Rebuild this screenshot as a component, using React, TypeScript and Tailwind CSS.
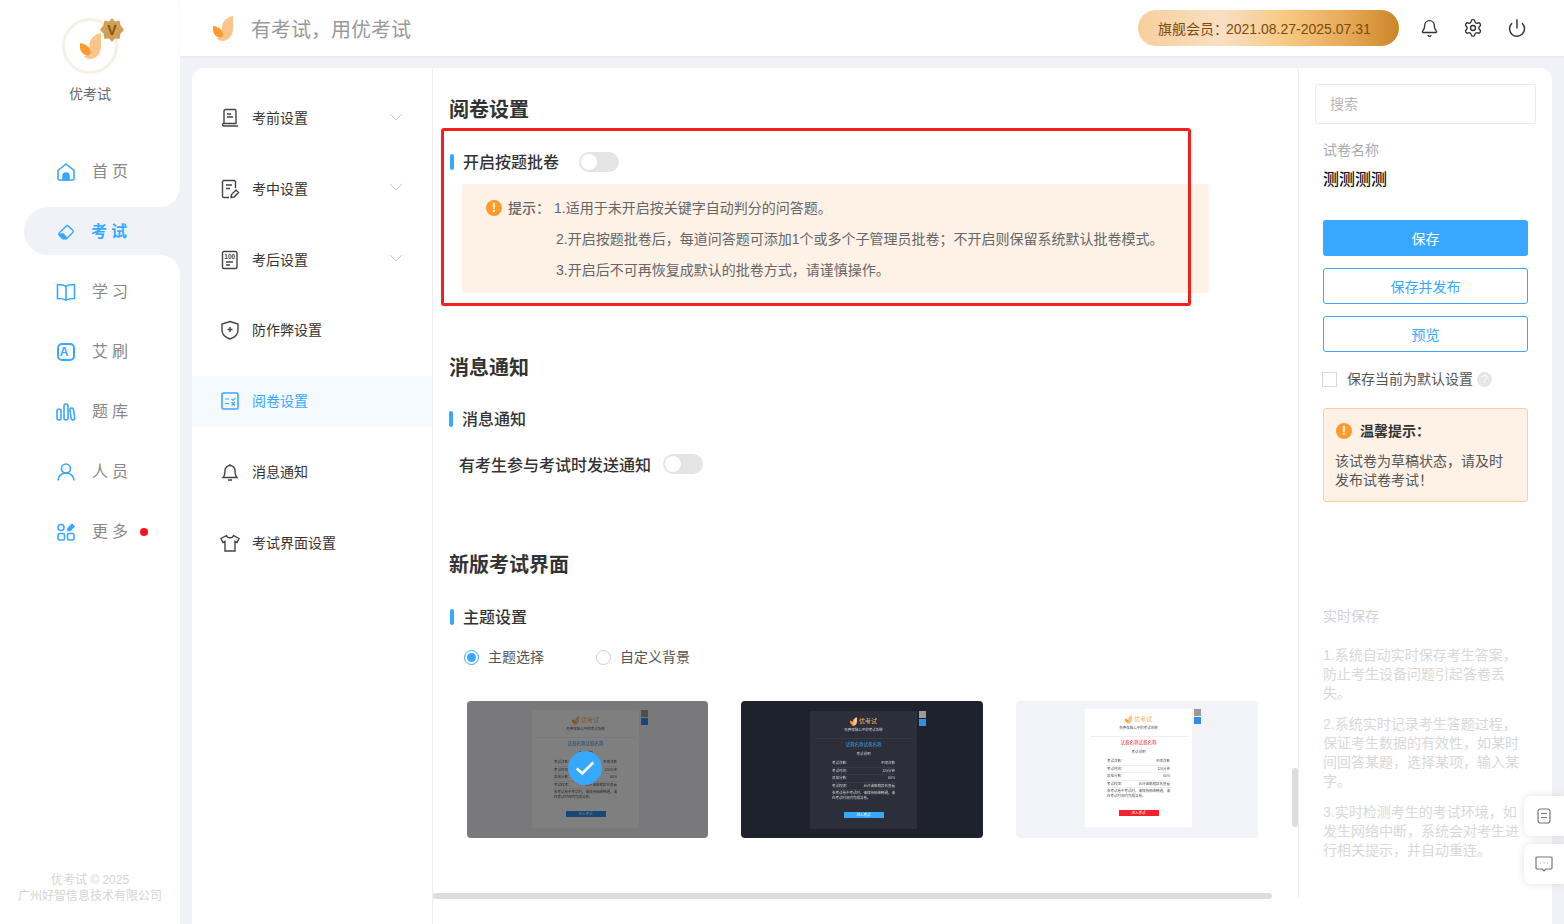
import { Bell, ChevronDown, Power, Settings } from 'lucide-react'
import type { ReactNode } from 'react'

const LogoMark = ({ className }: { className: string }) => (
  <svg viewBox="0 0 21 26" className={className}>
    <path d="M21 0V13C21 20.500 16.500 26 10 26C7.500 26 5.500 25 4 23.500C8 22.500 9.500 18 9.500 12C9.500 5.500 14.500 1.500 21 0Z" fill="#ffc48a" />
    <path d="M0 10C6 11 10.500 14.500 10.500 19C10.500 21.500 9.500 22.500 8 22.500C3.500 22.500 0 18.500 0 14Z" fill="#ff9a2e" />
  </svg>
)

const blueIcon = 'h-5 w-5 fill-none stroke-[#38a8ff] stroke-[1.6]'
const darkIcon = 'h-5 w-5 fill-none stroke-[#444] stroke-[1.4]'

const navTop = [
  {
    label: '首页',
    icon: (
      <svg viewBox="0 0 20 20" className={blueIcon}>
        <path d="M2 8.500L10 2L18 8.500V16.500A1.500 1.500 0 0 1 16.500 18H3.500A1.500 1.500 0 0 1 2 16.500Z" />
        <path d="M7 18V14A3 3 0 0 1 13 14V18Z" className="fill-[#38a8ff]" />
      </svg>
    ),
  },
]

const navBottom = [
  {
    label: '学习',
    icon: (
      <svg viewBox="0 0 20 20" className={blueIcon}>
        <path d="M10 4.500C8 3 5 2.500 1.500 2.500V16.500C5 16.500 8 17 10 18C12 17 15 16.500 18.500 16.500V2.500C15 2.500 12 3 10 4.500ZM10 4.500V18" />
      </svg>
    ),
  },
  {
    label: '艾刷',
    icon: (
      <span className="flex h-[18px] w-[18px] items-center justify-center rounded-[5px] border-2 border-[#38a8ff] text-[12px] font-bold leading-none text-[#38a8ff]">
        A
      </span>
    ),
  },
  {
    label: '题库',
    icon: (
      <svg viewBox="0 0 20 20" className={blueIcon}>
        <rect x="1" y="7" width="4" height="11" rx="2" />
        <rect x="8" y="2" width="4" height="16" rx="2" />
        <rect x="14.500" y="6" width="3.600" height="12" rx="1.800" transform="rotate(-8 16 12)" />
      </svg>
    ),
  },
  {
    label: '人员',
    icon: (
      <svg viewBox="0 0 20 20" className={blueIcon}>
        <circle cx="10" cy="6.500" r="4.500" />
        <path d="M2 18.500C2 14 5.500 11 10 11C14.500 11 18 14 18 18.500" />
      </svg>
    ),
  },
  {
    label: '更多',
    dot: true,
    icon: (
      <svg viewBox="0 0 20 20" className={blueIcon}>
        <circle cx="5" cy="5.500" r="3" />
        <rect x="2" y="11.500" width="6.500" height="6.500" rx="1.500" />
        <rect x="11.500" y="11.500" width="6.500" height="6.500" rx="1.500" />
        <path d="M12 6.500L16 2.500L18 4.500L14 8.500H12Z" className="fill-[#38a8ff]" />
      </svg>
    ),
  },
]

const NavRow = ({ label, icon, dot }: { label: string; icon: ReactNode; dot?: boolean }) => (
  <div className="flex h-[60.100px] items-center pl-[56px] text-base tracking-[4px] text-[#888]">
    <span className="flex w-5 justify-center">{icon}</span>
    <span className="ml-4">{label}</span>
    {dot && <span className="ml-2 h-2 w-2 rounded-full bg-[#f5141e]" />}
  </div>
)

const Sidebar = () => (
  <aside className="flex h-full w-[180px] shrink-0 flex-col bg-[#f1f2f7]">
    <div className="h-[207px] rounded-br-[20px] bg-white">
      <div className="relative mx-auto mt-[18px] flex h-14 w-14 items-center justify-center rounded-full border-[3px] border-[#f6f0e5]">
        <LogoMark className="h-[26px] w-[21px]" />
        <svg viewBox="0 0 24 24" className="absolute -top-[3px] -right-[9px] h-6 w-6">
          <polygon
            points="12,0 15,3.500 19.500,2.500 20.500,7 24,12 20.500,15.500 19.500,21 15,20.500 12,24 9,20.500 4.500,21 3.500,15.500 0,12 3.500,7 4.500,2.500 9,3.500"
            fill="#cfa055"
          />
          <text x="12" y="17" textAnchor="middle" fontSize="14" fontWeight="700" fill="#8a5208">
            V
          </text>
        </svg>
      </div>
      <div className="mt-[10px] text-center text-sm leading-5 text-[#666]">优考试</div>
      <div className="mt-[38px]">
        {navTop.map((item) => (
          <NavRow key={item.label} {...item} />
        ))}
      </div>
    </div>
    <div className="h-12 bg-white pl-6">
      <div className="flex h-full items-center rounded-l-[24px] bg-[#f1f2f7] pt-[2px] pl-[33px] text-base font-bold tracking-[4px] text-[#38a8ff]">
        <svg viewBox="0 0 20 20" className="h-[18px] w-[18px]">
          <path d="M2.500 11L10 3.500A1.800 1.800 0 0 1 12.500 3.500L17.500 8A1.800 1.800 0 0 1 17.500 10.500L10.500 17.500H6.500L2.500 13.500A1.800 1.800 0 0 1 2.500 11Z" fill="none" stroke="#38a8ff" strokeWidth="1.600" />
          <path d="M2 12L7 11L11 15.500L10 17.500H6.500L2.500 14Z" fill="#38a8ff" />
        </svg>
        <span className="ml-4">考试</span>
      </div>
    </div>
    <div className="flex flex-1 flex-col rounded-tr-[20px] bg-white pt-[7px]">
      {navBottom.map((item) => (
        <NavRow key={item.label} {...item} />
      ))}
      <div className="mt-auto pb-[20px] text-center text-xs leading-4 text-[#d4d4d4]">
        <p>优考试 © 2025</p>
        <p>广州好智信息技术有限公司</p>
      </div>
    </div>
  </aside>
)

const Header = () => (
  <header className="flex h-14 shrink-0 items-center bg-white pr-[37px] pl-[33px] shadow-[0_1px_3px_rgba(0,0,0,0.06)]">
    <LogoMark className="h-[25px] w-5" />
    <span className="ml-[18px] pt-1 text-xl text-[#999]">有考试，用优考试</span>
    <div className="ml-auto flex h-9 w-[261px] items-center rounded-full bg-[linear-gradient(90deg,#f7d09b_0%,#f9dfc4_32%,#f7c780_58%,#e4a654_82%,#cc8526_100%)] pt-[2px] pl-5 text-sm text-[#7a4a10]">
      旗舰会员<span className="-mr-0.5">：</span>2021.08.27-2025.07.31
    </div>
    <Bell className="ml-[21px] h-[19px] w-[19px] stroke-[#333]" strokeWidth={1.7} />
    <Settings className="ml-[24px] h-5 w-5 stroke-[#333]" strokeWidth={1.6} />
    <Power className="ml-[24px] h-5 w-5 stroke-[#333]" strokeWidth={1.7} />
  </header>
)

const subNav = [
  {
    label: '考前设置',
    arrow: true,
    icon: (
      <svg viewBox="0 0 20 20" className={darkIcon}>
        <path d="M4 15.500V3A1.500 1.500 0 0 1 5.500 1.500H14.500A1.500 1.500 0 0 1 16 3V16M7 6H11M7 9H13M3.500 18H18M3.500 18A1.300 1.300 0 0 1 3.500 15.500H16" />
      </svg>
    ),
  },
  {
    label: '考中设置',
    arrow: true,
    icon: (
      <svg viewBox="0 0 20 20" className={darkIcon}>
        <path d="M9 18.500H4A1.500 1.500 0 0 1 2.500 17V3A1.500 1.500 0 0 1 4 1.500H14A1.500 1.500 0 0 1 15.500 3V9M6 6H12M6 9.500H10M11 18.500L11.500 15.500L16 11L18.500 13.500L14 18Z" />
      </svg>
    ),
  },
  {
    label: '考后设置',
    arrow: true,
    icon: (
      <svg viewBox="0 0 20 20" className={darkIcon}>
        <rect x="2.500" y="1.500" width="14.500" height="17" rx="1.500" />
        <path d="M6 12H13M6 15H10" />
        <text x="9.700" y="9" textAnchor="middle" fontSize="6.500" fontWeight="700" fill="#444" stroke="none">
          100
        </text>
      </svg>
    ),
  },
  {
    label: '防作弊设置',
    icon: (
      <svg viewBox="0 0 20 20" className={darkIcon}>
        <path d="M10 1.500L18 4V10C18 14.500 14.500 17.500 10 19C5.500 17.500 2 14.500 2 10V4ZM10 7V12M7.500 9.500H12.500" />
      </svg>
    ),
  },
  {
    label: '阅卷设置',
    active: true,
    icon: (
      <svg viewBox="0 0 20 20" className={blueIcon}>
        <rect x="2" y="2" width="16" height="16" rx="1.500" />
        <path d="M5 8H9M5 12.500H9M11.500 8L13 9.500L15.500 6.500M11.500 11L15 14.500M15 11L11.500 14.500" strokeWidth="1.100" />
      </svg>
    ),
  },
  {
    label: '消息通知',
    icon: (
      <svg viewBox="0 0 20 20" className={darkIcon}>
        <path d="M3 15.500C4.500 14 5 13 5 8.500A5 5 0 0 1 15 8.500C15 13 15.500 14 17 15.500ZM8 18H12M10 2V3.500" />
      </svg>
    ),
  },
  {
    label: '考试界面设置',
    icon: (
      <svg viewBox="0 0 20 20" className={darkIcon}>
        <path d="M6.500 2.500L1 5.500L3 9.500L5 8.500V18H15V8.500L17 9.500L19 5.500L13.500 2.500C13 5.500 7 5.500 6.500 2.500Z" />
      </svg>
    ),
  },
]

const SubNav = () => (
  <nav className="flex w-[241px] shrink-0 flex-col gap-5 border-r border-[#eeeeee] pt-[24.600px]">
    {subNav.map((item) => (
      <div
        key={item.label}
        className={`flex h-[50.830px] items-center pl-[28px] text-sm ${item.active ? 'bg-[#f5faff] text-[#38a8ff]' : 'text-[#333]'}`}
      >
        <span className="flex w-5 justify-center">{item.icon}</span>
        <span className="ml-3">{item.label}</span>
        {item.arrow && <ChevronDown className="mt-[-3px] ml-auto mr-[24px] h-6 w-6 stroke-[#c8c8c8]" strokeWidth={1} />}
      </div>
    ))}
  </nav>
)

const Toggle = () => (
  <span className="flex h-5 w-10 items-center rounded-full bg-[#e4e4e4] pl-[2px]">
    <span className="h-4 w-4 rounded-full bg-white" />
  </span>
)

const SectionLabel = ({ children }: { children: ReactNode }) => (
  <div className="flex h-[22px] items-center text-base font-medium text-[#333]">
    <span className="h-4 w-1 rounded-sm bg-[#38a8ff]" />
    <span className="ml-[9px] pt-[2px]">{children}</span>
  </div>
)

const WarnIcon = ({ size }: { size: string }) => (
  <span className={`flex shrink-0 items-center justify-center rounded-full bg-[#ff9a2e] text-xs font-bold leading-none text-white ${size}`}>
    !
  </span>
)

const Radio = ({ checked, label }: { checked?: boolean; label: string }) => (
  <div className="flex items-center text-sm text-[#555]">
    <span className={`flex h-[15px] w-[15px] items-center justify-center rounded-full border ${checked ? 'border-[#38a8ff]' : 'border-[#cfcfcf]'}`}>
      {checked && <span className="h-[9px] w-[9px] rounded-full bg-[#38a8ff]" />}
    </span>
    <span className="ml-[9px]">{label}</span>
  </div>
)

const examRows = [
  ['考试次数：', '不限次数'],
  ['考试时间：', '120分钟'],
  ['及格分数：', '60%'],
  ['考试权限：', '允许该邮箱报名查看'],
]

type ThumbProps = {
  box: string
  panel: string
  accent: string
  line: string
  rowLine: string
  button: string
  selected?: boolean
}

const ThemeThumb = ({ box, panel, accent, line, rowLine, button, selected }: ThumbProps) => (
  <div className={`relative h-[137px] shrink-0 overflow-hidden rounded ${box}`}>
    <div className={`relative flex h-[118px] w-[107px] flex-col items-center pt-[6px] text-[3.500px] leading-[5px] ${panel}`}>
      <div className="flex items-center gap-[2px] text-[6px] leading-[9px] text-[#f2b36a] blur-[0.3px]">
        <LogoMark className="h-[9px] w-[7px]" />
        优考试
      </div>
      <div className="mt-[1.500px] blur-[0.3px]">免费保障公平的考试系统</div>
      <div className={`mt-[5px] h-px w-[98px] ${line}`} />
      <div className={`mt-[3px] text-[4.500px] leading-[6px] blur-[0.3px] ${accent}`}>试卷名称试卷名称</div>
      <div className="mt-1 blur-[0.3px]">考试说明</div>
      <div className="mt-[3.750px] w-[63px] blur-[0.3px]">
        {examRows.map(([name, value]) => (
          <div key={name} className={`flex h-[7.500px] items-center justify-between border-b ${rowLine}`}>
            <span>{name}</span>
            <span>{value}</span>
          </div>
        ))}
        <div className="mt-px">参考试卷中考试时，请保持网络畅通，请在考试时间内完成答卷。</div>
      </div>
      <div className={`mt-[10.750px] flex h-[6px] w-10 items-center justify-center text-white blur-[0.2px] ${button}`}>
        进入考试
      </div>
      <div className="absolute top-0 -right-[9px] flex flex-col gap-[1px]">
        <span className="h-[7px] w-[7px] bg-[#9a9a9a]" />
        <span className="h-[7px] w-[7px] bg-[#2f8fe8]" />
      </div>
    </div>
    {selected && (
      <div className="absolute inset-0 flex items-center justify-center bg-black/50 pr-[5px] pb-[3px]">
        <span className="flex h-[34px] w-[34px] items-center justify-center rounded-full bg-[#38a8ff]">
          <svg viewBox="0 0 20 20" className="h-[22px] w-[22px] fill-none stroke-white stroke-[2.400]">
            <path d="M2.500 10.500L7.500 15L17.500 5" />
          </svg>
        </span>
      </div>
    )}
  </div>
)

const ContentPane = () => (
  <section className="relative min-w-0 flex-1 overflow-hidden pt-[27px] pl-4">
    <h2 className="h-7 text-xl font-bold leading-[30px] text-[#333]">阅卷设置</h2>
    <div className="mt-[29px] flex h-5 items-center pl-px">
      <SectionLabel>开启按题批卷</SectionLabel>
      <span className="ml-[20px]">
        <Toggle />
      </span>
    </div>
    <div className="mt-3 ml-[13px] h-[109px] w-[747px] rounded-[3px] bg-[#fef1e6] pt-2 pl-6 text-sm text-[#666]">
      <div className="flex h-[31px] items-center">
        <WarnIcon size="h-4 w-4" />
        <span className="ml-[6px] font-medium">提示：</span>
        <span className="ml-1">1.适用于未开启按关键字自动判分的问答题。</span>
      </div>
      <div className="flex h-[31px] items-center pl-[70px]">2.开启按题批卷后，每道问答题可添加1个或多个子管理员批卷；不开启则保留系统默认批卷模式。</div>
      <div className="flex h-[31px] items-center pl-[70px]">3.开启后不可再恢复成默认的批卷方式，请谨慎操作。</div>
    </div>

    <h2 className="mt-[60px] h-7 text-xl font-bold leading-[30px] text-[#333]">消息通知</h2>
    <div className="mt-[27px]">
      <SectionLabel>消息通知</SectionLabel>
    </div>
    <div className="mt-6 flex h-5 items-center pl-[10px] text-base font-medium text-[#333]">
      <span className="pt-[3px]">有考生参与考试时发送通知</span>
      <span className="ml-3">
        <Toggle />
      </span>
    </div>

    <h2 className="mt-[76px] h-7 text-xl font-bold leading-[30px] text-[#333]">新版考试界面</h2>
    <div className="mt-7 pl-px">
      <SectionLabel>主题设置</SectionLabel>
    </div>
    <div className="mt-[19px] flex h-5 items-center gap-[52px] pl-[15px]">
      <Radio checked label="主题选择" />
      <Radio label="自定义背景" />
    </div>
    <div className="mt-[34px] ml-[18px] flex gap-[33px]">
      <ThemeThumb
        box="w-[241px] bg-[#f2f3f8] pt-[9px] pl-[65px]"
        panel="bg-white text-[#555]"
        accent="text-[#2f8fe8]"
        line="bg-[#eeeeee]"
        rowLine="border-[#eeeeee]"
        button="bg-[#2f8fe8]"
        selected
      />
      <ThemeThumb
        box="w-[242px] bg-[#1e222d] pt-[10px] pl-[69px]"
        panel="bg-[#2c2f3a] text-[#d5d5d5]"
        accent="text-[#38a8ff]"
        line="bg-[#383b46]"
        rowLine="border-[#383b46]"
        button="bg-[#38a8ff]"
      />
      <ThemeThumb
        box="w-[242px] bg-[#f2f3f8] pt-2 pl-[69px]"
        panel="bg-white text-[#555]"
        accent="text-[#f5222d]"
        line="bg-[#eeeeee]"
        rowLine="border-[#eeeeee]"
        button="bg-[#f5222d]"
      />
    </div>

    {/* annotation box over the first block */}
    <div className="absolute top-[60px] left-2 h-[178px] w-[750px] rounded-[3px] border-[3px] border-[#f5201c]" />
    {/* scrollbars */}
    <div className="absolute bottom-[25px] left-0 h-[6px] w-[839px] rounded-full bg-[#dddddd]" />
    <div className="absolute top-[700px] right-0 h-[59px] w-[6px] rounded-full bg-[#dddddd]" />
  </section>
)

const RightPane = () => (
  <aside className="flex h-[830px] w-[254px] shrink-0 flex-col border-l border-[#eeeeee] pt-4">
    <div className="ml-4 flex h-10 w-[221px] items-center rounded-[3px] border border-[#e8e8e8] pl-[14px] text-sm text-[#b5b5b5]">搜索</div>
    <div className="ml-6 w-[205px]">
      <div className="mt-4 text-sm leading-5 text-[#aaa]">试卷名称</div>
      <div className="mt-[10px] text-base font-medium leading-5 text-[#111]">测测测测</div>
      <button className="mt-[30px] block h-9 w-full rounded-[3px] bg-[#38a8ff] pt-[2px] text-sm text-white">保存</button>
      <button className="mt-3 block h-9 w-full rounded-[3px] border border-[#38a8ff] pt-[2px] text-sm text-[#38a8ff]">保存并发布</button>
      <button className="mt-3 block h-9 w-full rounded-[3px] border border-[#38a8ff] pt-[2px] text-sm text-[#38a8ff]">预览</button>
      <div className="mt-5 -ml-px flex h-[15px] items-center text-sm text-[#555]">
        <span className="h-[15px] w-[15px] border border-[#d9d9d9]" />
        <span className="ml-[10px] -mt-[2px]">保存当前为默认设置</span>
        <span className="ml-[4px] flex h-[15px] w-[15px] items-center justify-center rounded-full bg-[#e6e6e6] text-[11px] leading-none text-white">?</span>
      </div>
      <div className="mt-[21px] h-[94px] rounded-[3px] border border-[#fdcf9d] bg-[#fef1e6] pt-[13px] pr-3 pl-3 text-sm text-[#555]">
        <div className="flex h-[18px] items-center font-bold text-[#333]">
          <WarnIcon size="h-4 w-4" />
          <span className="ml-2">温馨提示：</span>
        </div>
        <p className="mt-3 -ml-px leading-[19px]">该试卷为草稿状态，请及时发布试卷考试！</p>
      </div>
      <div className="mt-[104px] text-sm leading-5 text-[#d2d2d2]">实时保存</div>
      <div className="mt-5 flex w-[198px] flex-col gap-3 text-sm leading-[19px] text-[#d8d8d8]">
        <p>1.系统自动实时保存考生答案，防止考生设备问题引起答卷丢失。</p>
        <p>2.系统实时记录考生答题过程，保证考生数据的有效性，如某时间回答某题，选择某项，输入某字。</p>
        <p>3.实时检测考生的考试环境，如发生网络中断，系统会对考生进行相关提示，并自动重连。</p>
      </div>
    </div>
  </aside>
)

const FloatTabs = () => (
  <div className="absolute top-[796px] right-0 flex flex-col gap-2">
    <div className="flex h-10 w-10 items-center justify-center rounded-l-lg bg-white shadow-[0_0_8px_rgba(0,0,0,0.12)]">
      <svg viewBox="0 0 16 16" className="h-4 w-4 fill-none stroke-[#777] stroke-[1.200]">
        <rect x="2" y="1" width="12" height="14" rx="2.500" />
        <path d="M5 5.500H11M5 9.500H11" />
      </svg>
    </div>
    <div className="flex h-10 w-10 items-center justify-center rounded-l-lg bg-white shadow-[0_0_8px_rgba(0,0,0,0.12)]">
      <svg viewBox="0 0 18 16" className="h-4 w-[18px] fill-none stroke-[#777] stroke-[1.200]">
        <path d="M2 1H16A1 1 0 0 1 17 2V12A1 1 0 0 1 16 13H11L9 15L7 13H2A1 1 0 0 1 1 12V2A1 1 0 0 1 2 1Z" />
        <path d="M5.500 7H6M8.800 7H9.300M12 7H12.500" strokeWidth="1.500" />
      </svg>
    </div>
  </div>
)

export default function App() {
  return (
    <div className="relative flex h-[924px] w-[1564px] overflow-hidden bg-[#f1f2f7] [font-family:'Liberation_Sans','Noto_Sans_CJK_SC',sans-serif]">
      <Sidebar />
      <div className="flex min-w-0 flex-1 flex-col">
        <Header />
        <main className="flex-1 overflow-hidden px-3 pt-3">
          <div className="flex h-full rounded-t-xl bg-white">
            <SubNav />
            <ContentPane />
            <RightPane />
          </div>
        </main>
      </div>
      <FloatTabs />
    </div>
  )
}
